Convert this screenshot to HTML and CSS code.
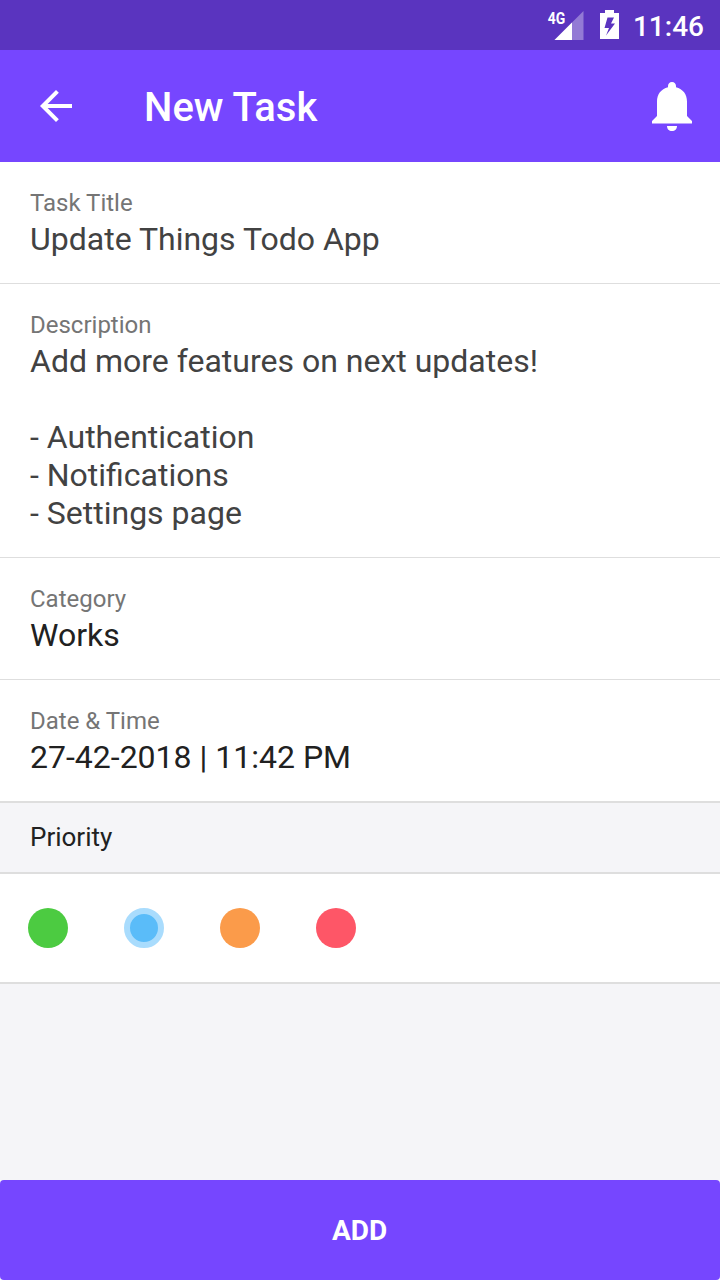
FILE: index.html
```html
<!DOCTYPE html>
<html lang="en">
<head>
<meta charset="utf-8">
<title>New Task</title>
<link rel="stylesheet" href="styles.css">
</head>
<body>
<div class="screen">
  <div class="status">
    <svg class="signal" width="38" height="32" viewBox="0 0 38 32"><path d="M36.500 2v29H7.500z" fill="#fff" opacity=".35"/><path d="M25 13.500V31H7.500z" fill="#fff"/><text class="net" x="0.800" y="15" textLength="17.500" lengthAdjust="spacingAndGlyphs">4G</text></svg>
    <svg class="battery" width="19" height="30" viewBox="0 0 19 30"><path fill="#fff" fill-rule="evenodd" d="M5 0h9v3h5v26H0V3h5zM7.500 7.500 4.500 18h4.500L6 25.500 15 13.500h-4L14 7.500z"/></svg>
    <span class="clock">11:46</span>
  </div>
  <header class="bar">
    <svg class="back" width="48" height="48" viewBox="0 0 24 24"><path fill="#fff" d="M20 11H7.830l5.590-5.590L12 4l-8 8 8 8 1.410-1.410L7.830 13H20v-2z"/></svg>
    <h1 class="title">New Task</h1>
    <svg class="bell" width="40" height="50" viewBox="0 0 40 50"><path fill="#fff" d="M20 0c-2.500 0-4 1.700-4 4v1.300C9 7 5 12.500 5 19.500V34l-5 5v2.500h40V39l-5-5V19.500C35 12.500 31 7 24 5.300V4c0-2.300-1.500-4-4-4zM15 44h10c0 3-2 5-5 5s-5-2-5-5z"/></svg>
  </header>
  <section class="field"><div class="label">Task Title</div><div class="value">Update Things Todo App</div></section>
  <section class="field"><div class="label">Description</div><div class="value">Add more features on next updates!

- Authentication
- Notifications
- Settings page</div></section>
  <section class="field dark"><div class="label">Category</div><div class="value">Works</div></section>
  <section class="field dark last"><div class="label">Date &amp; Time</div><div class="value">27-42-2018 | 11:42 PM</div></section>
  <div class="heading">Priority</div>
  <div class="dots"><i class="dot green"></i><i class="dot blue"></i><i class="dot orange"></i><i class="dot red"></i></div>
  <button class="add">ADD</button>
</div>
</body>
</html>
```
FILE: styles.css
```css
* { box-sizing: border-box; }
body { margin: 0; font-family: Roboto, sans-serif; }
.screen { width: 720px; height: 1280px; display: flex; flex-direction: column; background: #f5f5f8; }
.status { height: 50px; background: #5a34bf; color: #fff; display: flex; align-items: center; justify-content: flex-end; padding-right: 16px; }
.signal { margin-right: 15px; }
.battery { margin-right: 14px; }
.net { font: 700 17px Roboto, sans-serif; fill: #fff; }
.clock { font-size: 28px; font-weight: 500; line-height: 46px; padding-top: 4px; }
.bar { height: 112px; background: #7646ff; color: #fff; display: flex; align-items: center; padding: 0 28px 0 32px; }
.title { margin: 0 auto 0 64px; font-size: 40px; font-weight: 500; line-height: 48px; padding-top: 4px; }
.bell { margin-top: 2px; }
.field { background: #fff; border-bottom: 1px solid #dedede; padding: 26px 30px 25px; color: #424242; }
.label { font-size: 24px; line-height: 30px; height: 32px; color: #757575; }
.value { font-size: 32px; line-height: 38px; white-space: pre-wrap; }
.dark { color: #212121; }
.last { border-bottom: 0; }
.heading { height: 73px; border: solid #dedede; border-width: 2px 0; padding-left: 30px; font-size: 26px; line-height: 68px; color: #212121; }
.dots { height: 110px; background: #fff; border-bottom: 2px solid #dedede; display: flex; align-items: center; gap: 56px; padding-left: 28px; }
.dot { width: 40px; height: 40px; border-radius: 50%; }
.green { background: #4ccb41; }
.blue { background: #5abcf9; border: 6px solid #a9dcfd; }
.orange { background: #fb9b4a; }
.red { background: #fe5667; }
.add { margin-top: auto; height: 100px; border: 0; border-radius: 4px; padding: 0 1px 0 0; background: #7646ff; color: #fff; font: 700 28px Roboto, sans-serif; }
```
